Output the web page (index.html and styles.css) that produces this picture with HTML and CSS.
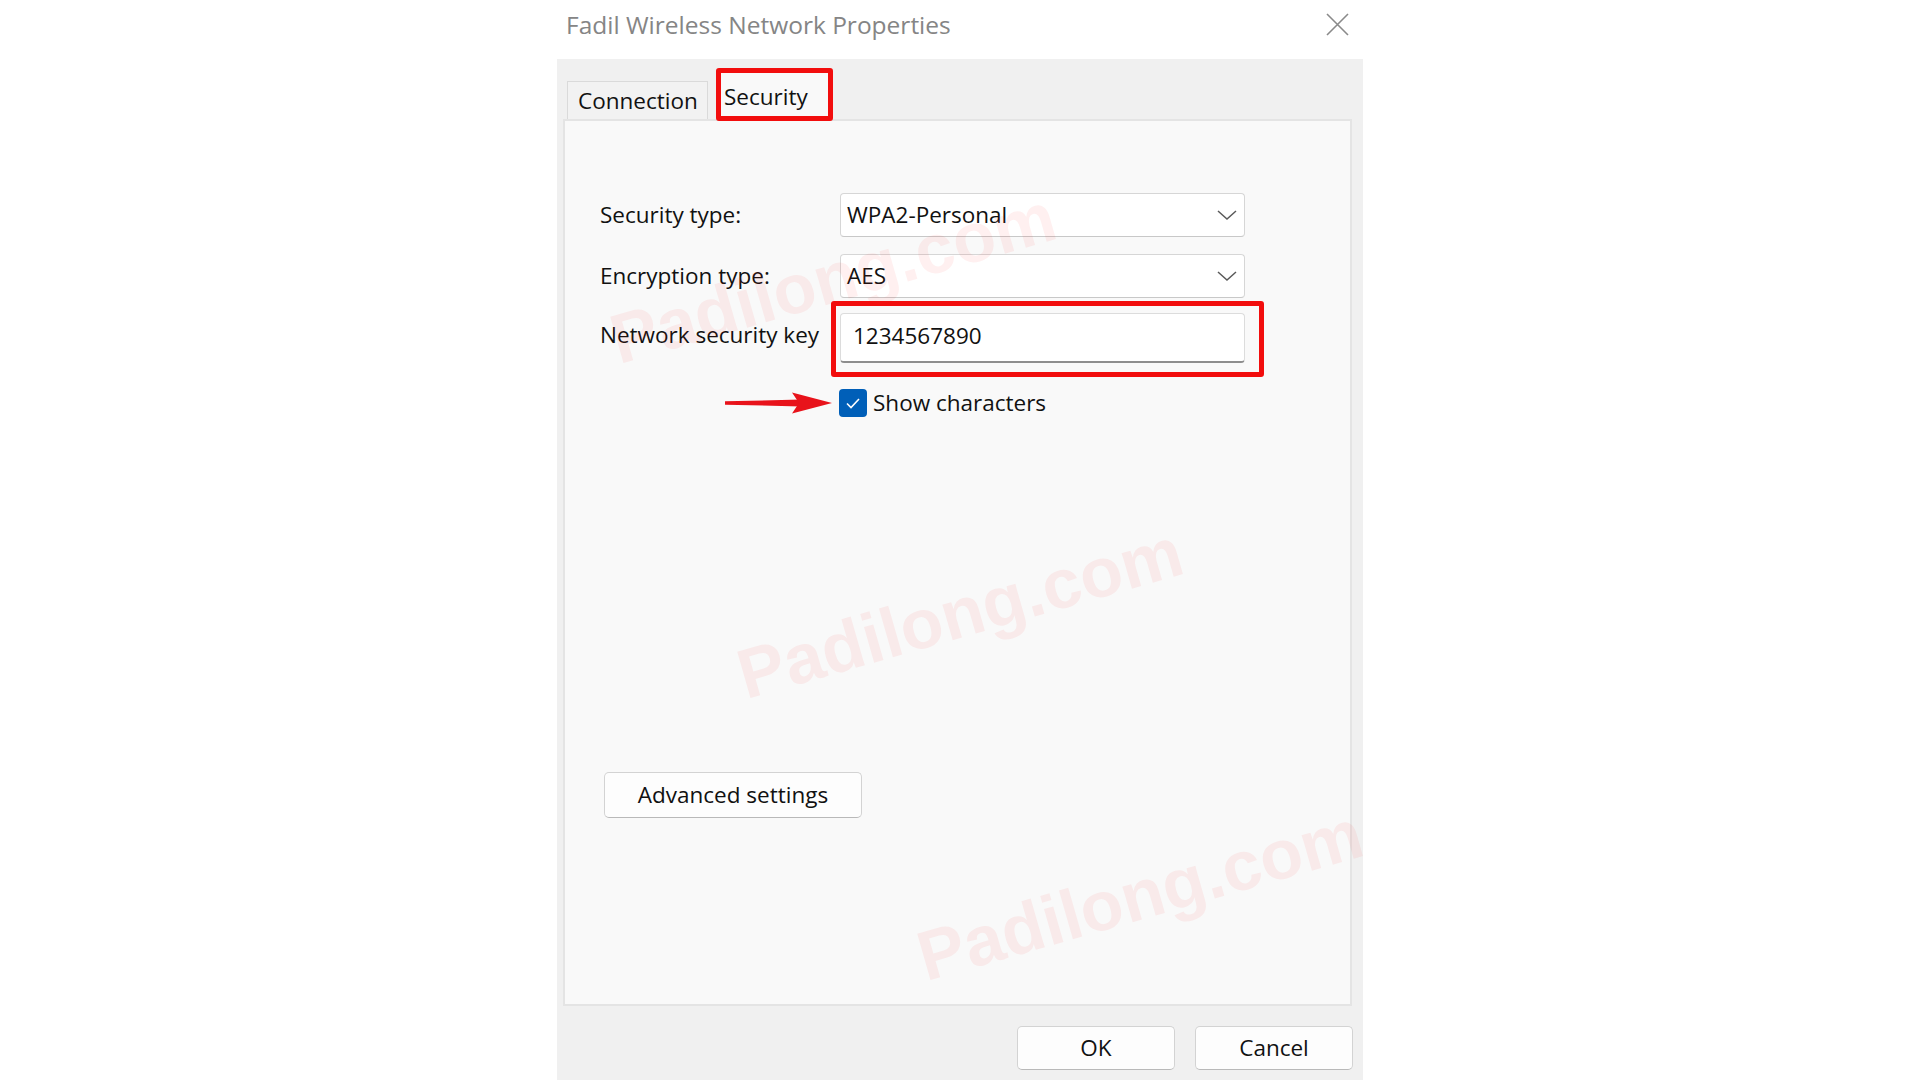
FILE: index.html
```html
<!DOCTYPE html>
<html lang="en">
<head>
<meta charset="utf-8">
<title>Fadil Wireless Network Properties</title>
<link rel="stylesheet" href="styles.css">
</head>
<body>
<div class="dialog">
  <div class="titlebar">
    <span class="title">Fadil Wireless Network Properties</span>
    <svg class="close" width="23" height="23" viewBox="0 0 23 23"><path d="M1 1 L22 22 M22 1 L1 22" stroke="#8a8a8a" stroke-width="1.6" fill="none"/></svg>
  </div>
  <div class="client">
    <div class="tabs">
      <div class="tab">Connection</div>
      <div class="tab active">Security</div>
    </div>
    <div class="panel">
      <div class="row">
        <span class="label">Security type:</span>
        <div class="select"><span>WPA2-Personal</span><svg width="20" height="10" viewBox="0 0 20 10"><polyline points="1,1 10,9 19,1" fill="none" stroke="#5a5a5a" stroke-width="1.5"/></svg></div>
      </div>
      <div class="row row2">
        <span class="label">Encryption type:</span>
        <div class="select"><span>AES</span><svg width="20" height="10" viewBox="0 0 20 10"><polyline points="1,1 10,9 19,1" fill="none" stroke="#5a5a5a" stroke-width="1.5"/></svg></div>
      </div>
      <div class="row row3">
        <span class="label">Network security key</span>
        <div class="keyinput">1234567890</div>
      </div>
      <div class="checkrow">
        <svg class="arrow" width="108" height="22" viewBox="0 0 108 22"><polygon points="0,9.2 76,7.6 76,14.4 0,12.8" fill="#e8131b"/><polygon points="67,0.5 107,11 67,21.5 74,11" fill="#e8131b"/></svg>
        <span class="checkbox"><svg width="28" height="28" viewBox="0 0 28 28"><polyline points="8,14.5 12,18.5 20,10" fill="none" stroke="#ffffff" stroke-width="1.6"/></svg></span>
        <span class="checklabel">Show characters</span>
      </div>
      <button class="btn adv">Advanced settings</button>
    </div>
    <div class="actions">
      <button class="btn act">OK</button>
      <button class="btn act">Cancel</button>
    </div>
  </div>
</div>
<div class="wm wm1">Padilong.com</div>
<div class="wm wm2">Padilong.com</div>
<div class="wm wm3">Padilong.com</div>
</body>
</html>
```

FILE: styles.css
```css
* { box-sizing: border-box; }
html, body { margin: 0; padding: 0; }
body {
  position: relative;
  width: 1920px;
  height: 1080px;
  overflow: hidden;
  background: #ffffff;
  font-family: "Open Sans", "Noto Sans", sans-serif;
  font-size: 22.5px;
  line-height: 30px;
  color: #111111;
}
.dialog {
  margin-left: 557px;
  width: 806px;
  height: 1080px;
  display: flex;
  flex-direction: column;
}
.titlebar {
  height: 59px;
  background: #ffffff;
  display: flex;
  justify-content: space-between;
  align-items: flex-start;
  padding-left: 9px;
  padding-right: 14px;
}
.title {
  font-size: 24.5px;
  line-height: 34px;
  margin-top: 8px;
  color: #858585;
}
.close { margin-top: 13px; }
.client {
  flex: 1;
  background: #f0f0f0;
  padding: 0 11px 0 6px;
}
.tabs {
  position: relative;
  z-index: 1;
  height: 62px;
  margin-bottom: -2px;
  display: flex;
  align-items: flex-end;
  padding-left: 4px;
}
.tab {
  width: 141px;
  height: 38px;
  margin-bottom: 2px;
  border: 1px solid #dadada;
  border-bottom: none;
  background: #f2f2f2;
  padding: 4px 0 0 10px;
  white-space: nowrap;
}
.tab.active {
  width: 117px;
  height: 53px;
  margin-bottom: 0;
  margin-left: 8px;
  border: 5px solid #f20d0d;
  border-radius: 3px;
  background: #f9f9f9;
  padding: 9px 0 0 3px;
}
.panel {
  height: 887px;
  border: 2px solid #e4e4e4;
  background: #f9f9f9;
  padding: 72px 0 0 35px;
  display: flex;
  flex-direction: column;
  align-items: flex-start;
}
.row {
  display: flex;
  align-items: center;
}
.row2 { margin-top: 17px; }
.row3 { margin-top: 15px; }
.row3 .label { margin-top: -6px; }
.label {
  width: 240px;
  white-space: nowrap;
}
.select {
  width: 405px;
  height: 44px;
  background: #ffffff;
  border: 1px solid #d6d6d6;
  border-bottom-color: #c8c8c8;
  border-radius: 4px;
  display: flex;
  align-items: center;
  justify-content: space-between;
  padding: 0 7px 0 6px;
}
.keyinput {
  position: relative;
  width: 405px;
  height: 50px;
  background: #ffffff;
  border: 1px solid #dcdcdc;
  border-bottom: 2px solid #8e8e8e;
  border-radius: 4px;
  padding: 0 0 4px 12px;
  display: flex;
  align-items: center;
}
.keyinput::after {
  content: "";
  position: absolute;
  top: -13px;
  left: -10px;
  right: -20px;
  bottom: -16px;
  border: 5px solid #f20d0d;
  border-radius: 3px;
}
.checkrow {
  position: relative;
  margin-top: 25px;
  margin-left: 239px;
  display: flex;
  align-items: center;
}
.arrow {
  position: absolute;
  left: -114px;
  top: 4px;
}
.checkbox {
  width: 28px;
  height: 28px;
  border-radius: 4px;
  background: #005fb8;
  display: flex;
}
.checklabel { margin-left: 6px; }
.btn {
  font-family: "Open Sans", "Noto Sans", sans-serif;
  font-size: 22.5px;
  line-height: 30px;
  color: #111111;
  background: #fdfdfd;
  border: 1px solid #d3d3d3;
  border-bottom-color: #b9b9b9;
  border-radius: 5px;
  padding: 0;
}
.adv {
  margin-top: 354px;
  margin-left: 4px;
  width: 258px;
  height: 46px;
}
.actions {
  margin-top: 20px;
  margin-right: -1px;
  display: flex;
  justify-content: flex-end;
  gap: 20px;
}
.act {
  width: 158px;
  height: 44px;
}
.wm {
  position: absolute;
  z-index: 5;
  pointer-events: none;
  font-family: "Liberation Sans", Arial, sans-serif;
  font-weight: bold;
  font-size: 70px;
  line-height: 70px;
  white-space: nowrap;
  color: rgba(255, 40, 40, 0.07);
  transform: translate(-50%, -50%) rotate(-16deg);
}
.wm1 { left: 833px; top: 278px; }
.wm2 { left: 960px; top: 613px; }
.wm3 { left: 1140px; top: 895px; }
```
